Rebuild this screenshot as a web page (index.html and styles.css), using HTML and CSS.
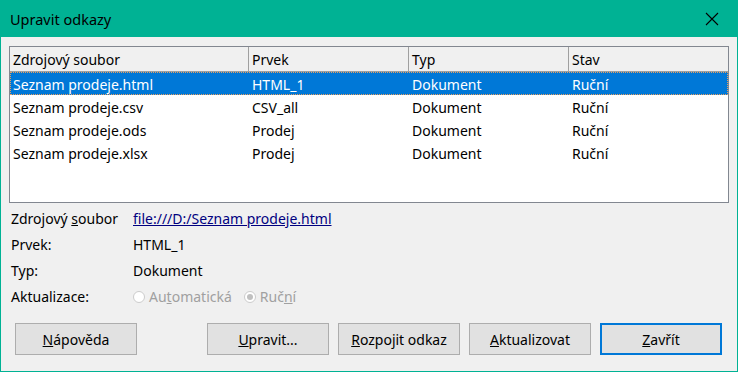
FILE: index.html
```html
<!DOCTYPE html>
<html lang="cs">
<head>
  <meta charset="UTF-8">
  <title>Upravit odkazy</title>
  <link rel="stylesheet" href="styles.css">
</head>
<body>
  <div class="dialog">
    <div class="titlebar">
      <span class="title">Upravit odkazy</span>
      <svg class="close" width="14" height="14" viewBox="0 0 14 14">
        <path d="M1 1 L13 13 M13 1 L1 13" stroke="#000" stroke-width="1.1" fill="none"/>
      </svg>
    </div>

    <div class="content">
      <div class="links">
        <div class="links-head">
          <div class="col">Zdrojový soubor</div>
          <div class="col">Prvek</div>
          <div class="col">Typ</div>
          <div class="col last">Stav</div>
        </div>
        <div class="row selected">
          <div>Seznam prodeje.html</div><div>HTML_1</div><div>Dokument</div><div>Ruční</div>
        </div>
        <div class="row">
          <div>Seznam prodeje.csv</div><div>CSV_all</div><div>Dokument</div><div>Ruční</div>
        </div>
        <div class="row">
          <div>Seznam prodeje.ods</div><div>Prodej</div><div>Dokument</div><div>Ruční</div>
        </div>
        <div class="row">
          <div>Seznam prodeje.xlsx</div><div>Prodej</div><div>Dokument</div><div>Ruční</div>
        </div>
      </div>

      <div class="details">
        <div class="label">Zdrojový <u>s</u>oubor</div>
        <div class="value"><a href="#" class="file-link">file:///D:/Seznam prodeje.html</a></div>
        <div class="label">Prvek:</div>
        <div class="value">HTML_1</div>
        <div class="label">Typ:</div>
        <div class="value">Dokument</div>
        <div class="label">Aktualizace:</div>
        <div class="value radios">
          <span class="radio"><span class="dot"></span>Au<u>t</u>omatická</span>
          <span class="radio"><span class="dot checked"></span>Ruč<u>n</u>í</span>
        </div>
      </div>

      <div class="buttons">
        <button class="btn"><u>N</u>ápověda</button>
        <div class="spacer"></div>
        <button class="btn"><u>U</u>pravit...</button>
        <button class="btn"><u>R</u>ozpojit odkaz</button>
        <button class="btn"><u>A</u>ktualizovat</button>
        <button class="btn default"><u>Z</u>avřít</button>
      </div>
    </div>
  </div>
</body>
</html>
```

FILE: styles.css
```css
:root {
  --accent: #00b294;
  --bg: #f0f0f0;
  --select: #0078d7;
  --grid-line: #a0a0a0;
}

body {
  margin: 0;
  padding: 0;
  font-family: 'Noto Sans', sans-serif;
  font-size: 14px;
  color: #000;
}

.dialog {
  width: 738px;
  height: 372px;
  box-sizing: border-box;
  border: 1px solid var(--accent);
  border-top: none;
  background-color: var(--bg);
  display: flex;
  flex-direction: column;
}

.titlebar {
  height: 37px;
  margin: 0 -1px;
  background-color: var(--accent);
  display: flex;
  align-items: center;
  justify-content: space-between;
  padding: 0 19px 0 10px;
  flex-shrink: 0;
}

.title {
  font-size: 14.5px;
}

.content {
  padding: 9px 8px 0 8px;
}

.links {
  height: 155px;
  border: 1px solid #828790;
  background-color: #fff;
}

.links-head,
.row {
  display: grid;
  grid-template-columns: 239px 160px 160px 1fr;
}

.links-head {
  height: 24px;
  background-color: var(--bg);
  border-bottom: 1px solid var(--grid-line);
}

.links-head .col {
  padding: 1px 0 0 3px;
  line-height: 23px;
  border-right: 1px solid var(--grid-line);
}

.links-head .col.last {
  border-right: none;
}

.row {
  height: 23px;
  line-height: 22px;
  box-sizing: border-box;
  padding-top: 2px;
}

.row div {
  padding-left: 3px;
}

.row.selected {
  background-color: var(--select);
  color: #fff;
  outline: 1px dotted #e8a060;
  outline-offset: -1px;
}

.details {
  display: grid;
  grid-template-columns: 122px 1fr;
  margin-top: 3px;
  padding-left: 2px;
}

.label,
.value {
  height: 26px;
  line-height: 26px;
  white-space: nowrap;
}

.file-link {
  color: #000080;
  text-decoration: underline;
}

.radios {
  display: flex;
  gap: 12px;
  color: #a0a0a0;
}

.radio {
  display: flex;
  align-items: center;
}

.dot {
  width: 12px;
  height: 12px;
  border: 1px solid #cccccc;
  border-radius: 50%;
  background-color: #fff;
  margin-right: 4px;
  box-sizing: border-box;
  position: relative;
}

.dot.checked::after {
  content: "";
  position: absolute;
  left: 2px;
  top: 2px;
  width: 6px;
  height: 6px;
  border-radius: 50%;
  background-color: #c0c0c0;
}

.buttons {
  display: flex;
  gap: 9px;
  margin-top: 13px;
  padding-left: 6px;
}

.spacer {
  width: 52px;
  flex-shrink: 0;
}

.btn {
  width: 122px;
  height: 32px;
  flex-shrink: 0;
  font-family: inherit;
  font-size: 14px;
  color: #000;
  background-color: #e1e1e1;
  border: 1px solid #adadad;
  padding: 0;
}

.btn.default {
  border: 2px solid var(--select);
}
```
